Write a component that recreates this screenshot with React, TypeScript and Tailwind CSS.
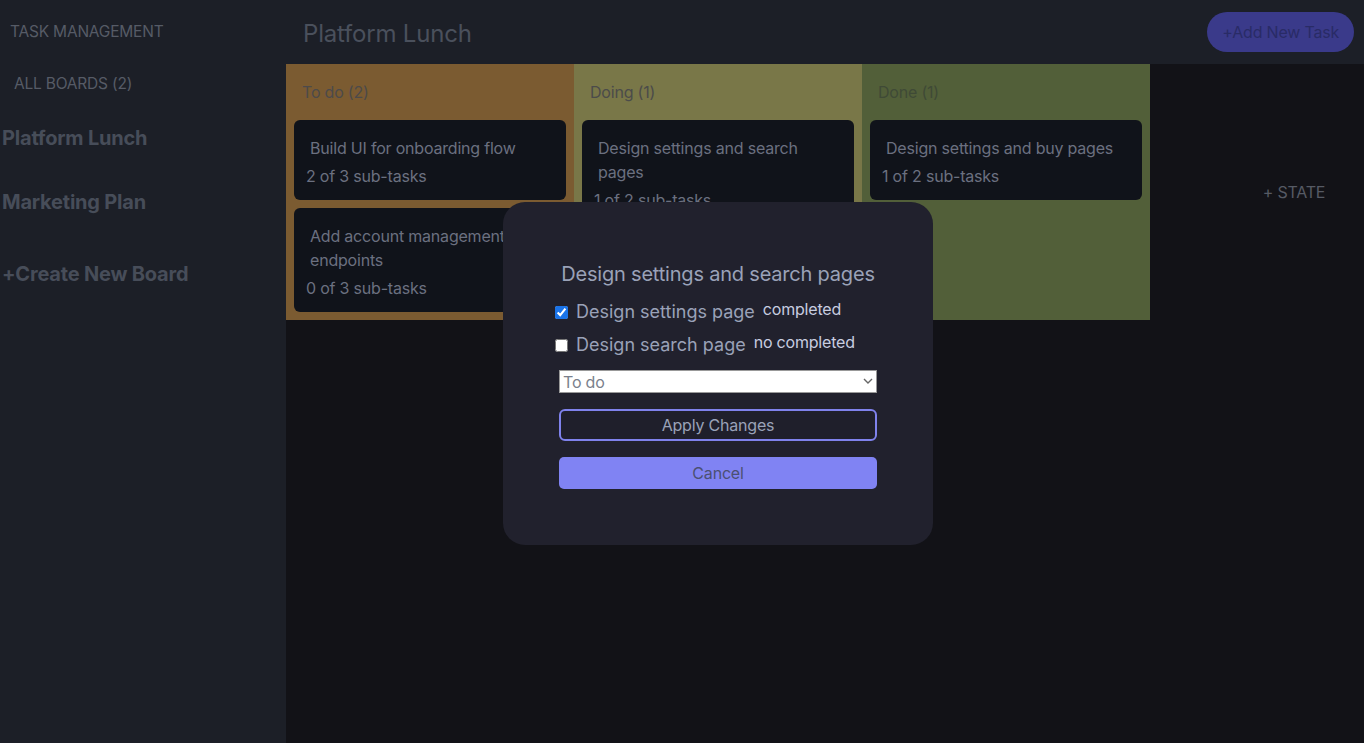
import React from "react";

const font = { fontFamily: "Inter, 'Noto Sans', sans-serif" };

function Card({ title, sub }: { title: string; sub: string }) {
  return (
    <div className="bg-[#10131a] rounded-[6px] px-3 pt-[16px] pb-[12px]">
      <div className="pl-[4px] text-[16px] leading-[24px] text-[#6b7080]">{title}</div>
      <div className="text-[16px] leading-[24px] mt-[4px] text-[#6b7080]">{sub}</div>
    </div>
  );
}

export default function App() {
  return (
    <div style={font} className="relative w-[1364px] h-[743px] flex bg-[#121217] overflow-hidden tracking-[-0.2px]">
      <aside className="w-[286px] h-full bg-[#1c1f27] flex flex-col">
        <div className="pl-[10px] pt-[22px] text-[15.5px] leading-[20px] text-[#565b66]">TASK MANAGEMENT</div>
        <div className="pl-[14px] mt-[32px] text-[15.5px] leading-[20px] text-[#565b66]">ALL BOARDS (2)</div>
        <div className="pl-[2px] mt-[31px] text-[20px] font-bold leading-[26px] text-[#474d59]">Platform Lunch</div>
        <div className="pl-[2px] mt-[38px] text-[20px] font-bold leading-[26px] text-[#474d59]">Marketing Plan</div>
        <div className="pl-[2px] mt-[46px] text-[20px] font-bold leading-[26px] text-[#474d59]">+Create New Board</div>
      </aside>
      <main className="flex-1 flex flex-col">
        <header className="h-[64px] bg-[#1c1f27] flex items-center justify-between pl-[17px] pr-[10px]">
          <div className="text-[24px] leading-[32px] pt-[4px] text-[#4a505c]">Platform Lunch</div>
          <div className="h-[40px] px-[15px] rounded-full bg-[#3a3a8a] flex items-center text-[16px] text-[#292b66]">+Add New Task</div>
        </header>
        <div className="flex items-start">
          <section className="w-[288px] h-[256px] bg-[#7b5b31] px-[8px] flex flex-col">
            <div className="pl-[8px] pt-[17px] pb-[17px] text-[16px] leading-[22px] text-[#4c4a4a]">To do (2)</div>
            <div className="flex flex-col gap-[8px]">
              <Card title="Build UI for onboarding flow" sub="2 of 3 sub-tasks" />
              <Card title="Add account management endpoints" sub="0 of 3 sub-tasks" />
            </div>
          </section>
          <section className="w-[288px] h-[256px] bg-[#797748] px-[8px] flex flex-col">
            <div className="pl-[8px] pt-[17px] pb-[17px] text-[16px] leading-[22px] text-[#4b4b4a]">Doing (1)</div>
            <Card title="Design settings and search pages" sub="1 of 2 sub-tasks" />
          </section>
          <section className="w-[288px] h-[256px] bg-[#525f39] px-[8px] flex flex-col">
            <div className="pl-[8px] pt-[17px] pb-[17px] text-[16px] leading-[22px] text-[#3f4a36]">Done (1)</div>
            <Card title="Design settings and buy pages" sub="1 of 2 sub-tasks" />
          </section>
          <div className="flex-1 h-[256px] flex items-center justify-center pl-[74px] pb-[0px]">
            <span className="text-[16px] text-[#565a64]">+ STATE</span>
          </div>
        </div>
      </main>
      <div className="absolute left-[503px] top-[202px] w-[430px] h-[343px] rounded-[22px] bg-[#21212d] px-[56px] pt-[58px]">
        <div className="text-center text-[20px] leading-[28px] text-[#9aa2b8]">Design settings and search pages</div>
        <div className="mt-[12px] flex items-center gap-[8px] -ml-[4px]">
          <input type="checkbox" defaultChecked className="w-[13px] h-[13px] accent-[#1a73e8]" />
          <span className="text-[18px] leading-[24px] tracking-[0px] text-[#9aa2b8]">Design settings page</span>
          <span className="text-[16px] leading-[20px] text-[#c8cde0] -mt-[6px]">completed</span>
        </div>
        <div className="mt-[9px] flex items-center gap-[8px] -ml-[4px]">
          <input type="checkbox" className="w-[13px] h-[13px]" />
          <span className="text-[18px] leading-[24px] tracking-[0px] text-[#9aa2b8]">Design search page</span>
          <span className="text-[16px] leading-[20px] text-[#c8cde0] -mt-[6px]">no completed</span>
        </div>
        <div className="mt-[13px] relative h-[23px] bg-white border border-[#999] flex items-center">
          <span className="pl-[3px] text-[16px] text-[#7a7f8c]">To do</span>
          <svg className="absolute right-[3px] top-[7px]" width="10" height="7" viewBox="0 0 10 7"><path d="M1 1l4 4 4-4" fill="none" stroke="#666" strokeWidth="1.4" /></svg>
        </div>
        <button className="mt-[16px] w-full h-[32px] rounded-[6px] border-2 border-[#7f82ec] bg-[#1f1f2b] text-[16px] text-[#9aa2b8]">Apply Changes</button>
        <button className="mt-[16px] w-full h-[32px] rounded-[5px] bg-[#8083f3] text-[16px] text-[#4b5072]">Cancel</button>
      </div>
    </div>
  );
}
